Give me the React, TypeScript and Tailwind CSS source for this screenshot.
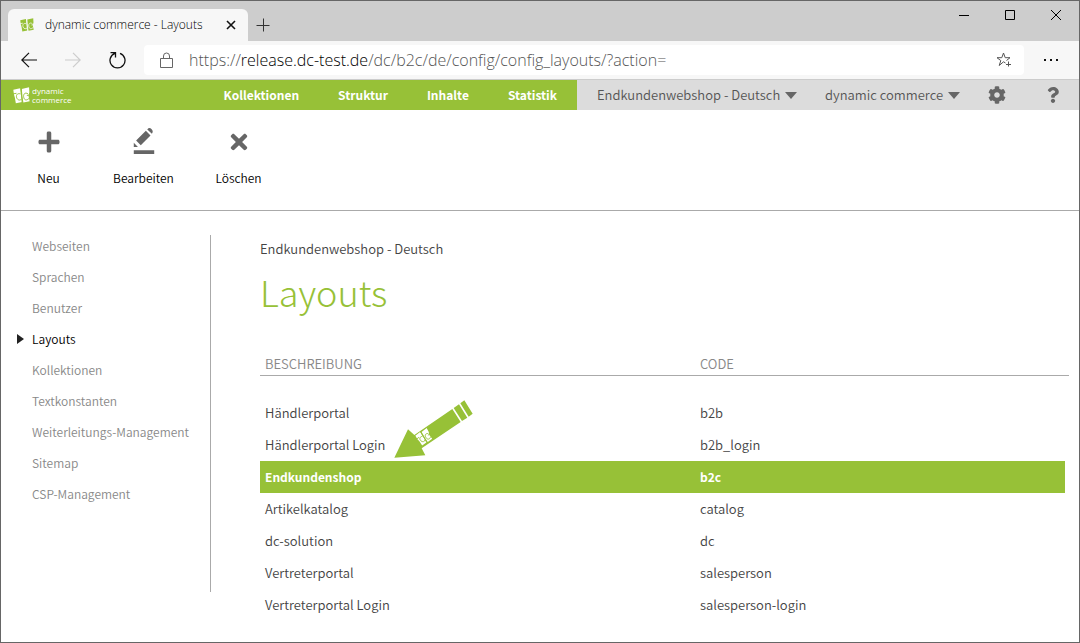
import { FaCog, FaPlus, FaQuestion, FaTimes } from "react-icons/fa";

const navItems = ["Kollektionen", "Struktur", "Inhalte", "Statistik"];

const sideItems = [
  "Webseiten",
  "Sprachen",
  "Benutzer",
  "Layouts",
  "Kollektionen",
  "Textkonstanten",
  "Weiterleitungs-Management",
  "Sitemap",
  "CSP-Management",
];

const layouts = [
  { name: "Händlerportal", code: "b2b" },
  { name: "Händlerportal Login", code: "b2b_login" },
  { name: "Endkundenshop", code: "b2c" },
  { name: "Artikelkatalog", code: "catalog" },
  { name: "dc-solution", code: "dc" },
  { name: "Vertreterportal", code: "salesperson" },
  { name: "Vertreterportal Login", code: "salesperson-login" },
];

// two tilted tiles, the round shapes are cut out in the background colour
function LogoMark({ className, cut }: { className: string; cut: string }) {
  return (
    <svg viewBox="0 0 54 54" className={className} fill="currentColor" aria-hidden="true">
      <path d="M1 9L23 4 25 20 29 48 9 52 6 34 3 24zM28 6L51 1 52 17 49 28 53 45 33 49 30 30z" />
      <g fill="none" stroke={cut} strokeWidth="3">
        <path d="M25 2L29 50M24 22C12 18 9 28 12 35S23 44 27 38M48 22C37 15 32 24 34 33S43 44 51 36" />
        <path d="M0 22L11 20M44 27L54 25" />
      </g>
    </svg>
  );
}

function Dropdown({ label, value }: { label: string; value: string }) {
  return (
    <div className="relative flex items-center">
      <select
        aria-label={label}
        className="appearance-none bg-transparent pr-4 text-[13px] leading-5 text-[#555] outline-none"
      >
        <option>{value}</option>
      </select>
      <svg viewBox="0 0 12 7" className="pointer-events-none absolute right-0 h-[7px] w-3" fill="#666">
        <path d="M0 0h12L6 7z" />
      </svg>
    </div>
  );
}

function BrowserBar() {
  return (
    <header className="font-['Open_Sans',sans-serif] font-light text-black">
      <div className="flex h-10 items-end justify-between bg-[#cdcdcd] pl-[7px]">
        <div className="flex items-center">
          <div className="flex h-8 w-60 items-center rounded-t-md bg-[#f7f7f7] pr-2 pl-3">
            <LogoMark className="h-[14px] w-[14px] text-[#97c137]" cut="#f7f7f7" />
            <span className="ml-[11px] flex-1 text-xs whitespace-nowrap">dynamic commerce - Layouts</span>
            <button aria-label="Tab schließen" className="p-1">
              <svg viewBox="0 0 10 10" className="h-[10px] w-[10px]" stroke="#111" strokeWidth="1.6">
                <path d="M1 1l8 8M9 1l-8 8" />
              </svg>
            </button>
          </div>
          <button aria-label="Neuer Tab" className="ml-2">
            <svg viewBox="0 0 14 14" className="h-[14px] w-[14px]" stroke="#333" strokeWidth="1">
              <path d="M7.500.5v13M.5 7.500h13" />
            </svg>
          </button>
        </div>
        <div className="flex h-10 items-start gap-9 pt-[9px] pr-[18px]">
          <button aria-label="Minimieren">
            <svg viewBox="0 0 10 10" className="h-[10px] w-[10px]" stroke="#000">
              <path d="M0 5.500h10" />
            </svg>
          </button>
          <button aria-label="Maximieren">
            <svg viewBox="0 0 10 10" className="h-[10px] w-[10px]" stroke="#000" fill="none">
              <path d="M.5.5h9v9h-9z" />
            </svg>
          </button>
          <button aria-label="Schließen">
            <svg viewBox="0 0 10 10" className="h-[10px] w-[10px]" stroke="#000">
              <path d="M0 0l10 10M10 0L0 10" />
            </svg>
          </button>
        </div>
      </div>

      <div className="flex h-[39px] items-center border-b border-[#ccc] bg-[#f7f7f7] pl-5">
        <button aria-label="Zurück">
          <svg viewBox="0 0 16 16" className="h-4 w-4" stroke="#111" strokeWidth="1.2" fill="none">
            <path d="M16 8H1M8 .8L.8 8 8 15.200" />
          </svg>
        </button>
        <button aria-label="Vorwärts" className="ml-7">
          <svg viewBox="0 0 16 16" className="h-4 w-4" stroke="#ccc" strokeWidth="1.2" fill="none">
            <path d="M0 8h15M8 .8L15.200 8 8 15.200" />
          </svg>
        </button>
        <button aria-label="Neu laden" className="ml-7">
          <svg viewBox="0 0 17 18" className="h-[18px] w-[17px]" stroke="#111" strokeWidth="1.3" fill="none">
            <path d="M11 2.400A7.500 7.500 0 1 1 6 2.400M1.500 1.700H6.500V6.500" />
          </svg>
        </button>
        <div className="ml-[18px] flex h-[30px] flex-1 items-center rounded bg-white pr-3 pl-4">
          <svg viewBox="0 0 13 16" className="h-4 w-[13px]" stroke="#666" fill="none">
            <path d="M.5 6.500h12v9H.5zM3.500 6.500V4a3 3 0 0 1 6 0v2.500" />
          </svg>
          <p className="ml-4 flex-1 text-base whitespace-nowrap text-[#555]">
            https://<span className="text-black">release.dc-test.de</span>/dc/b2c/de/config/config_layouts/?action=
          </p>
          <button aria-label="Zu Favoriten hinzufügen">
            <svg viewBox="0 0 16 16" className="h-4 w-4" stroke="#555" fill="none">
              <path d="M9.500 11L7.500 9.800 3.200 13.500 4.800 8.600 1 5.700h4.800L7.500 1l1.700 4.700H14L10.500 8.500M12.500 9.500v5M10 12.500h5" />
            </svg>
          </button>
        </div>
        <button aria-label="Mehr" className="mr-[21px] ml-5">
          <svg viewBox="0 0 14 2" className="h-[2px] w-[14px]" fill="#111">
            <path d="M0 0h2v2H0zM6 0h2v2H6zM12 0h2v2h-2z" />
          </svg>
        </button>
      </div>
    </header>
  );
}

function MainNav() {
  return (
    <div className="flex h-[30px] bg-[#dcdcdc] text-[13px] leading-5">
      <nav className="flex w-[576px] shrink-0 items-center bg-[#97c137] pr-5 pl-3 text-white">
        <a href="#" className="mr-auto flex items-center gap-[2px]">
          <LogoMark className="h-[17px] w-[17px]" cut="#97c137" />
          <span className="flex flex-col font-['Open_Sans',sans-serif] text-[8px] leading-[9px] font-normal">
            <span>dynamic</span>
            <span>commerce</span>
          </span>
        </a>
        <div className="flex gap-[39px] text-xs leading-5 font-bold">
          {navItems.map((item) => (
            <a key={item} href="#">
              {item}
            </a>
          ))}
        </div>
      </nav>
      <div className="flex flex-1 items-center px-5">
        <Dropdown label="Webseite" value="Endkundenwebshop - Deutsch" />
        <div className="ml-7">
          <Dropdown label="Mandant" value="dynamic commerce" />
        </div>
        <button aria-label="Einstellungen" className="ml-7">
          <FaCog className="h-[18px] w-[18px] text-[#666]" />
        </button>
        <button aria-label="Hilfe" className="ml-auto">
          <FaQuestion className="h-5 w-3 text-[#666]" />
        </button>
      </div>
    </div>
  );
}

function Toolbar() {
  return (
    <div className="flex h-[101px] border-b border-[#aaa] text-xs leading-5 text-black">
      <button className="flex w-[95px] flex-col items-center pt-5">
        <span className="flex h-6 items-center">
          <FaPlus className="h-6 w-6 text-[#666]" />
        </span>
        <span className="mt-[14px]">Neu</span>
      </button>
      <button className="flex w-[95px] flex-col items-center pt-[18px]">
        <svg viewBox="0 0 24 28" className="h-[26px] w-6" fill="#666">
          <path d="M1 24h22v4H1zM1 20.500V16l4.500 4.500zM3.500 13.500L14 3l5 5L8.500 18.500zM15.500 1.600c1.500-2 3-2 4.500-.5s2 3 .5 5z" />
        </svg>
        <span className="mt-[14px]">Bearbeiten</span>
      </button>
      <button className="flex w-[95px] flex-col items-center pt-5">
        <span className="flex h-6 items-center">
          <FaTimes className="h-6 w-6 text-[#666]" />
        </span>
        <span className="mt-[14px]">Löschen</span>
      </button>
    </div>
  );
}

function Sidebar() {
  return (
    <aside className="mt-6 h-[357px] w-[210px] shrink-0 border-r border-[#aaa] text-xs leading-[22px] text-[#888]">
      <ul>
        {sideItems.map((item) => (
          <li key={item} className="flex h-[31px] items-start">
            <span className="flex h-[22px] w-[31px] items-center pl-4">
              {item === "Layouts" && (
                <svg viewBox="0 0 7 10" className="h-[10px] w-[7px]" fill="#222">
                  <path d="M0 0l7 5-7 5z" />
                </svg>
              )}
            </span>
            <a href="#" className={item === "Layouts" ? "text-black" : ""}>
              {item}
            </a>
          </li>
        ))}
      </ul>
    </aside>
  );
}

function PointerArrow() {
  return (
    <svg viewBox="40 27 243 180" className="absolute top-[48px] left-[133px] h-[60px] w-[81px]" fill="#97c137">
      <path d="M44 203L85 118 104 135 218 57 243 96 126 175 137 196zM222 54L238 43 263 83 247 93zM242 40L254 31 279 71 267 80z" />
      <g transform="translate(103 131) rotate(-25)" color="#fff">
        <svg width="44" height="44" overflow="visible">
          <LogoMark className="h-[44px] w-[44px]" cut="#97c137" />
        </svg>
      </g>
    </svg>
  );
}

function LayoutTable() {
  return (
    <div className="relative mt-10">
      <table className="w-full table-fixed border-separate border-spacing-0 text-left text-[13px] leading-5 text-[#444]">
        <thead className="text-[#888]">
          <tr>
            <th className="h-[25px] w-[435px] border-b border-[#aaa] pt-[2px] pl-[5px] font-[350]">BESCHREIBUNG</th>
            <th className="border-b border-[#aaa] pt-[2px] pl-[5px] font-[350]">CODE</th>
          </tr>
        </thead>
        <tbody className="before:block before:h-[21px]">
          {layouts.map(({ name, code }) => (
            <tr key={code} className={code === "b2c" ? "text-xs leading-5 font-bold text-white" : ""}>
              <td className={code === "b2c" ? "h-8 bg-[#97c137] pl-[5px]" : "h-8 pl-[5px]"}>{name}</td>
              <td
                className={
                  code === "b2c"
                    ? "h-8 border-r-4 border-white bg-[#97c137] pl-[5px]"
                    : "h-8 border-r-4 border-white pl-[5px]"
                }
              >
                {code}
              </td>
            </tr>
          ))}
        </tbody>
      </table>
      <PointerArrow />
    </div>
  );
}

export default function App() {
  return (
    <div className="min-h-screen border border-[#666] bg-white font-['Noto_Sans_CJK_SC',sans-serif] font-[350]">
      <BrowserBar />
      <MainNav />
      <Toolbar />
      <div className="flex">
        <Sidebar />
        <main className="flex-1 pt-7 pr-[10px] pb-4 pl-[49px]">
          <p className="text-[13px] leading-5 text-[#444]">Endkundenwebshop - Deutsch</p>
          <h1 className="mt-3 text-4xl leading-[40px] font-light text-[#97c137]">Layouts</h1>
          <LayoutTable />
        </main>
      </div>
    </div>
  );
}
